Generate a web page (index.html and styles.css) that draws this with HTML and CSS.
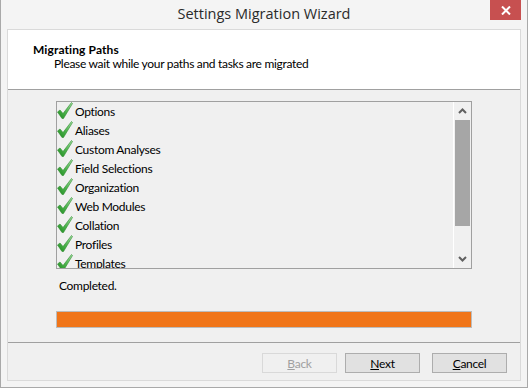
FILE: index.html
```html
<!DOCTYPE html>
<html lang="en">
<head>
    <meta charset="UTF-8">
    <title>Settings Migration Wizard</title>
    <link rel="stylesheet" href="styles.css">
</head>
<body>
    <div class="window">
        <div class="titlebar">
            <span></span>
            <div class="title">Settings Migration Wizard</div>
            <button class="close-button">
                <svg width="10" height="9" viewBox="0 0 10 9"><path d="M1 0.5 L9 8.5 M9 0.5 L1 8.5" stroke="#fff" stroke-width="2"/></svg>
            </button>
        </div>

        <div class="client">
            <div class="header">
                <div class="header-title">Migrating Paths</div>
                <div class="header-text">Please wait while your paths and tasks are migrated</div>
            </div>

            <div class="content">
                <div class="listbox">
                    <ul class="items">
                        <li><svg class="check"><use href="#check"/></svg>Options</li>
                        <li><svg class="check"><use href="#check"/></svg>Aliases</li>
                        <li><svg class="check"><use href="#check"/></svg>Custom Analyses</li>
                        <li><svg class="check"><use href="#check"/></svg>Field Selections</li>
                        <li><svg class="check"><use href="#check"/></svg>Organization</li>
                        <li><svg class="check"><use href="#check"/></svg>Web Modules</li>
                        <li><svg class="check"><use href="#check"/></svg>Collation</li>
                        <li><svg class="check"><use href="#check"/></svg>Profiles</li>
                        <li><svg class="check"><use href="#check"/></svg>Templates</li>
                    </ul>
                    <div class="scrollbar">
                        <svg class="arrow" width="9" height="6" viewBox="0 0 9 6"><path d="M1 5 L4.5 1.5 L8 5" fill="none" stroke="#606060" stroke-width="2"/></svg>
                        <div class="track"><div class="thumb"></div></div>
                        <svg class="arrow" width="9" height="6" viewBox="0 0 9 6"><path d="M1 1 L4.5 4.5 L8 1" fill="none" stroke="#606060" stroke-width="2"/></svg>
                    </div>
                </div>

                <div class="status">Completed.</div>
                <div class="progress"><div class="progress-fill" style="width: 100%"></div></div>
            </div>

            <div class="footer">
                <button class="wizard-button" disabled><u>B</u>ack</button>
                <button class="wizard-button"><u>N</u>ext</button>
                <button class="wizard-button cancel"><u>C</u>ancel</button>
            </div>
        </div>
    </div>

    <svg width="0" height="0" style="position: absolute">
        <defs>
            <linearGradient id="check-fill" x1="0" y1="1" x2="1" y2="0">
                <stop offset="0" stop-color="#1f8a1f"/>
                <stop offset="0.5" stop-color="#4fb54f"/>
                <stop offset="1" stop-color="#a6e0a6"/>
            </linearGradient>
            <symbol id="check" viewBox="0 0 16 17">
                <path d="M0.5 10 L3 8 L6 11.5 L14.5 0.5 L15.5 1.5 L6.5 16.5 L5 16.5 Z" fill="url(#check-fill)" stroke="#2d8c2d" stroke-width="0.6"/>
            </symbol>
        </defs>
    </svg>
</body>
</html>
```

FILE: styles.css
```css
body {
    margin: 0;
    padding: 0;
    font-family: Lato, "Noto Sans", sans-serif;
    font-size: 12px;
    letter-spacing: -0.3px;
    color: #000;
}

.window {
    width: 528px;
    height: 388px;
    box-sizing: border-box;
    background-color: #f4f4f4;
    border: 1px solid #a9a9a9;
    border-top: none;
    display: flex;
    flex-direction: column;
}

.titlebar {
    height: 29px;
    display: grid;
    grid-template-columns: 1fr auto 1fr;
    align-items: start;
}

.title {
    font-family: "Open Sans", sans-serif;
    font-size: 14.5px;
    letter-spacing: 0;
    color: #2b2b2b;
    line-height: 16px;
    padding-top: 6px;
}

.close-button {
    justify-self: end;
    margin-right: 6px;
    width: 31px;
    height: 20px;
    border: none;
    padding: 0;
    background-color: #c75050;
    display: flex;
    align-items: center;
    justify-content: center;
}

.client {
    margin: 0 6px;
    height: 352px;
    box-sizing: border-box;
    border: 1px solid #dadada;
    background-color: #f0f0f0;
    display: flex;
    flex-direction: column;
}

.header {
    height: 60px;
    background-color: #fff;
    border-bottom: 1px solid #a0a0a0;
    padding: 13px 0 0 25px;
    box-sizing: border-box;
    line-height: 14px;
}

.header-title {
    font-weight: bold;
    letter-spacing: 0.1px;
}

.header-text {
    padding-left: 21px;
}

.content {
    height: 253px;
    box-sizing: border-box;
    border-bottom: 1px solid #a0a0a0;
    padding: 11px 0 0 48px;
}

.listbox {
    width: 416px;
    height: 168px;
    box-sizing: border-box;
    border: 1px solid #a0a0a0;
    display: flex;
}

.items {
    flex: 1;
    list-style: none;
    margin: 0;
    padding: 0;
    overflow: hidden;
}

.items li {
    height: 19px;
    line-height: 19px;
    display: flex;
    align-items: center;
    gap: 2px;
}

.check {
    width: 16px;
    height: 17px;
    margin-top: -3px;
}

.scrollbar {
    width: 17px;
    border-left: 1px solid #fff;
    display: flex;
    flex-direction: column;
    align-items: center;
}

.arrow {
    margin: 6px 0;
}

.track {
    flex: 1;
    width: 100%;
}

.thumb {
    height: 106px;
    margin: 0 1px;
    background-color: #a6a6a6;
}

.status {
    margin: 9px 0 0 3px;
    line-height: 16px;
}

.progress {
    width: 416px;
    height: 17px;
    margin-top: 17px;
    box-sizing: border-box;
    border: 1px solid #bcbcbc;
}

.progress-fill {
    height: 100%;
    background-color: #f07519;
}

.footer {
    flex: 1;
    display: flex;
    justify-content: flex-end;
    align-items: flex-start;
    padding: 10px 13px 0 0;
}

.wizard-button {
    width: 75px;
    height: 20px;
    margin-left: 8px;
    padding: 0;
    font-family: Lato, "Noto Sans", sans-serif;
    font-size: 12px;
    letter-spacing: -0.3px;
    color: #000;
    background-color: #e1e1e1;
    border: 1px solid #adadad;
}

.wizard-button:disabled {
    color: #a0a0a0;
    background-color: #f0f0f0;
    border-color: #d9d9d9;
}

.wizard-button.cancel {
    margin-left: 12px;
}
```
